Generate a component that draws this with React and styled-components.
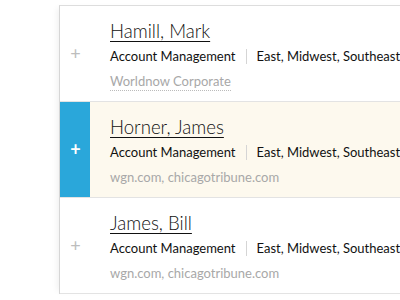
import React from "react";
import styled, { createGlobalStyle } from "styled-components";

const Global = createGlobalStyle`
  html, body { margin: 0; padding: 0; background: #fff; }
  body { font-family: "Lato", "Open Sans", sans-serif; overflow: hidden; }
`;

const Page = styled.div`
  width: 400px;
  height: 300px;
  overflow: hidden;
  padding: 5px 0 0 59px;
  box-sizing: border-box;
`;

const List = styled.ul`
  list-style: none;
  margin: 0;
  padding: 0;
  width: 420px;
  border-top: 1px solid #dddddd;
  border-left: 1px solid #d6d6d6;
  box-shadow: -5px 0 6px -3px rgba(0, 0, 0, 0.06);
`;

const Row = styled.li`
  display: flex;
  height: 95px;
  border-bottom: 1px solid #e3e3e3;
  background: ${(p) => (p.$active ? "#fdf9ee" : "#fff")};
`;

const Toggle = styled.div`
  width: 30px;
  flex: none;
  display: flex;
  align-items: center;
  justify-content: center;
  background: ${(p) => (p.$active ? "#2aa7da" : "transparent")};
  color: ${(p) => (p.$active ? "#fff" : "#bdbdbd")};
  font-size: 18px;
  font-weight: ${(p) => (p.$active ? 700 : 400)};
  padding: 0 0 2px 1px;
  box-sizing: border-box;
`;

const Body = styled.div`
  padding: 13px 0 0 20px;
  display: flex;
  flex-direction: column;
  white-space: nowrap;
`;

const Name = styled.a`
  font-size: 18.6px;
  font-weight: 300;
  color: #111;
  text-decoration: underline;
  text-underline-offset: 3px;
  text-decoration-thickness: 1px;
  line-height: 24px;
  align-self: flex-start;
`;

const Meta = styled.div`
  display: flex;
  align-items: center;
  margin-top: 4px;
  font-size: 13px;
  color: #111;
  line-height: 18px;
`;

const Sep = styled.span`
  display: inline-block;
  width: 1px;
  height: 15px;
  background: #d5d5d5;
  margin: 0 10px;
`;

const Company = styled.div`
  margin-top: 7px;
  font-size: 13px;
  line-height: 18px;
  color: #a8a8a8;
  align-self: flex-start;
  border-bottom: ${(p) => (p.$dotted ? "1px dotted #bbb" : "none")};
`;

const people = [
  { name: "Hamill, Mark", company: "Worldnow Corporate", dotted: true },
  { name: "Horner, James", company: "wgn.com, chicagotribune.com", active: true },
  { name: "James, Bill", company: "wgn.com, chicagotribune.com" },
];

export default function App() {
  return (
    <>
      <Global />
      <Page>
        <List>
          {people.map((p) => (
            <Row key={p.name} $active={p.active}>
              <Toggle $active={p.active}>+</Toggle>
              <Body>
                <Name>{p.name}</Name>
                <Meta>
                  Account Management
                  <Sep />
                  East, Midwest, Southeast
                </Meta>
                <Company $dotted={p.dotted}>{p.company}</Company>
              </Body>
            </Row>
          ))}
        </List>
      </Page>
    </>
  );
}
